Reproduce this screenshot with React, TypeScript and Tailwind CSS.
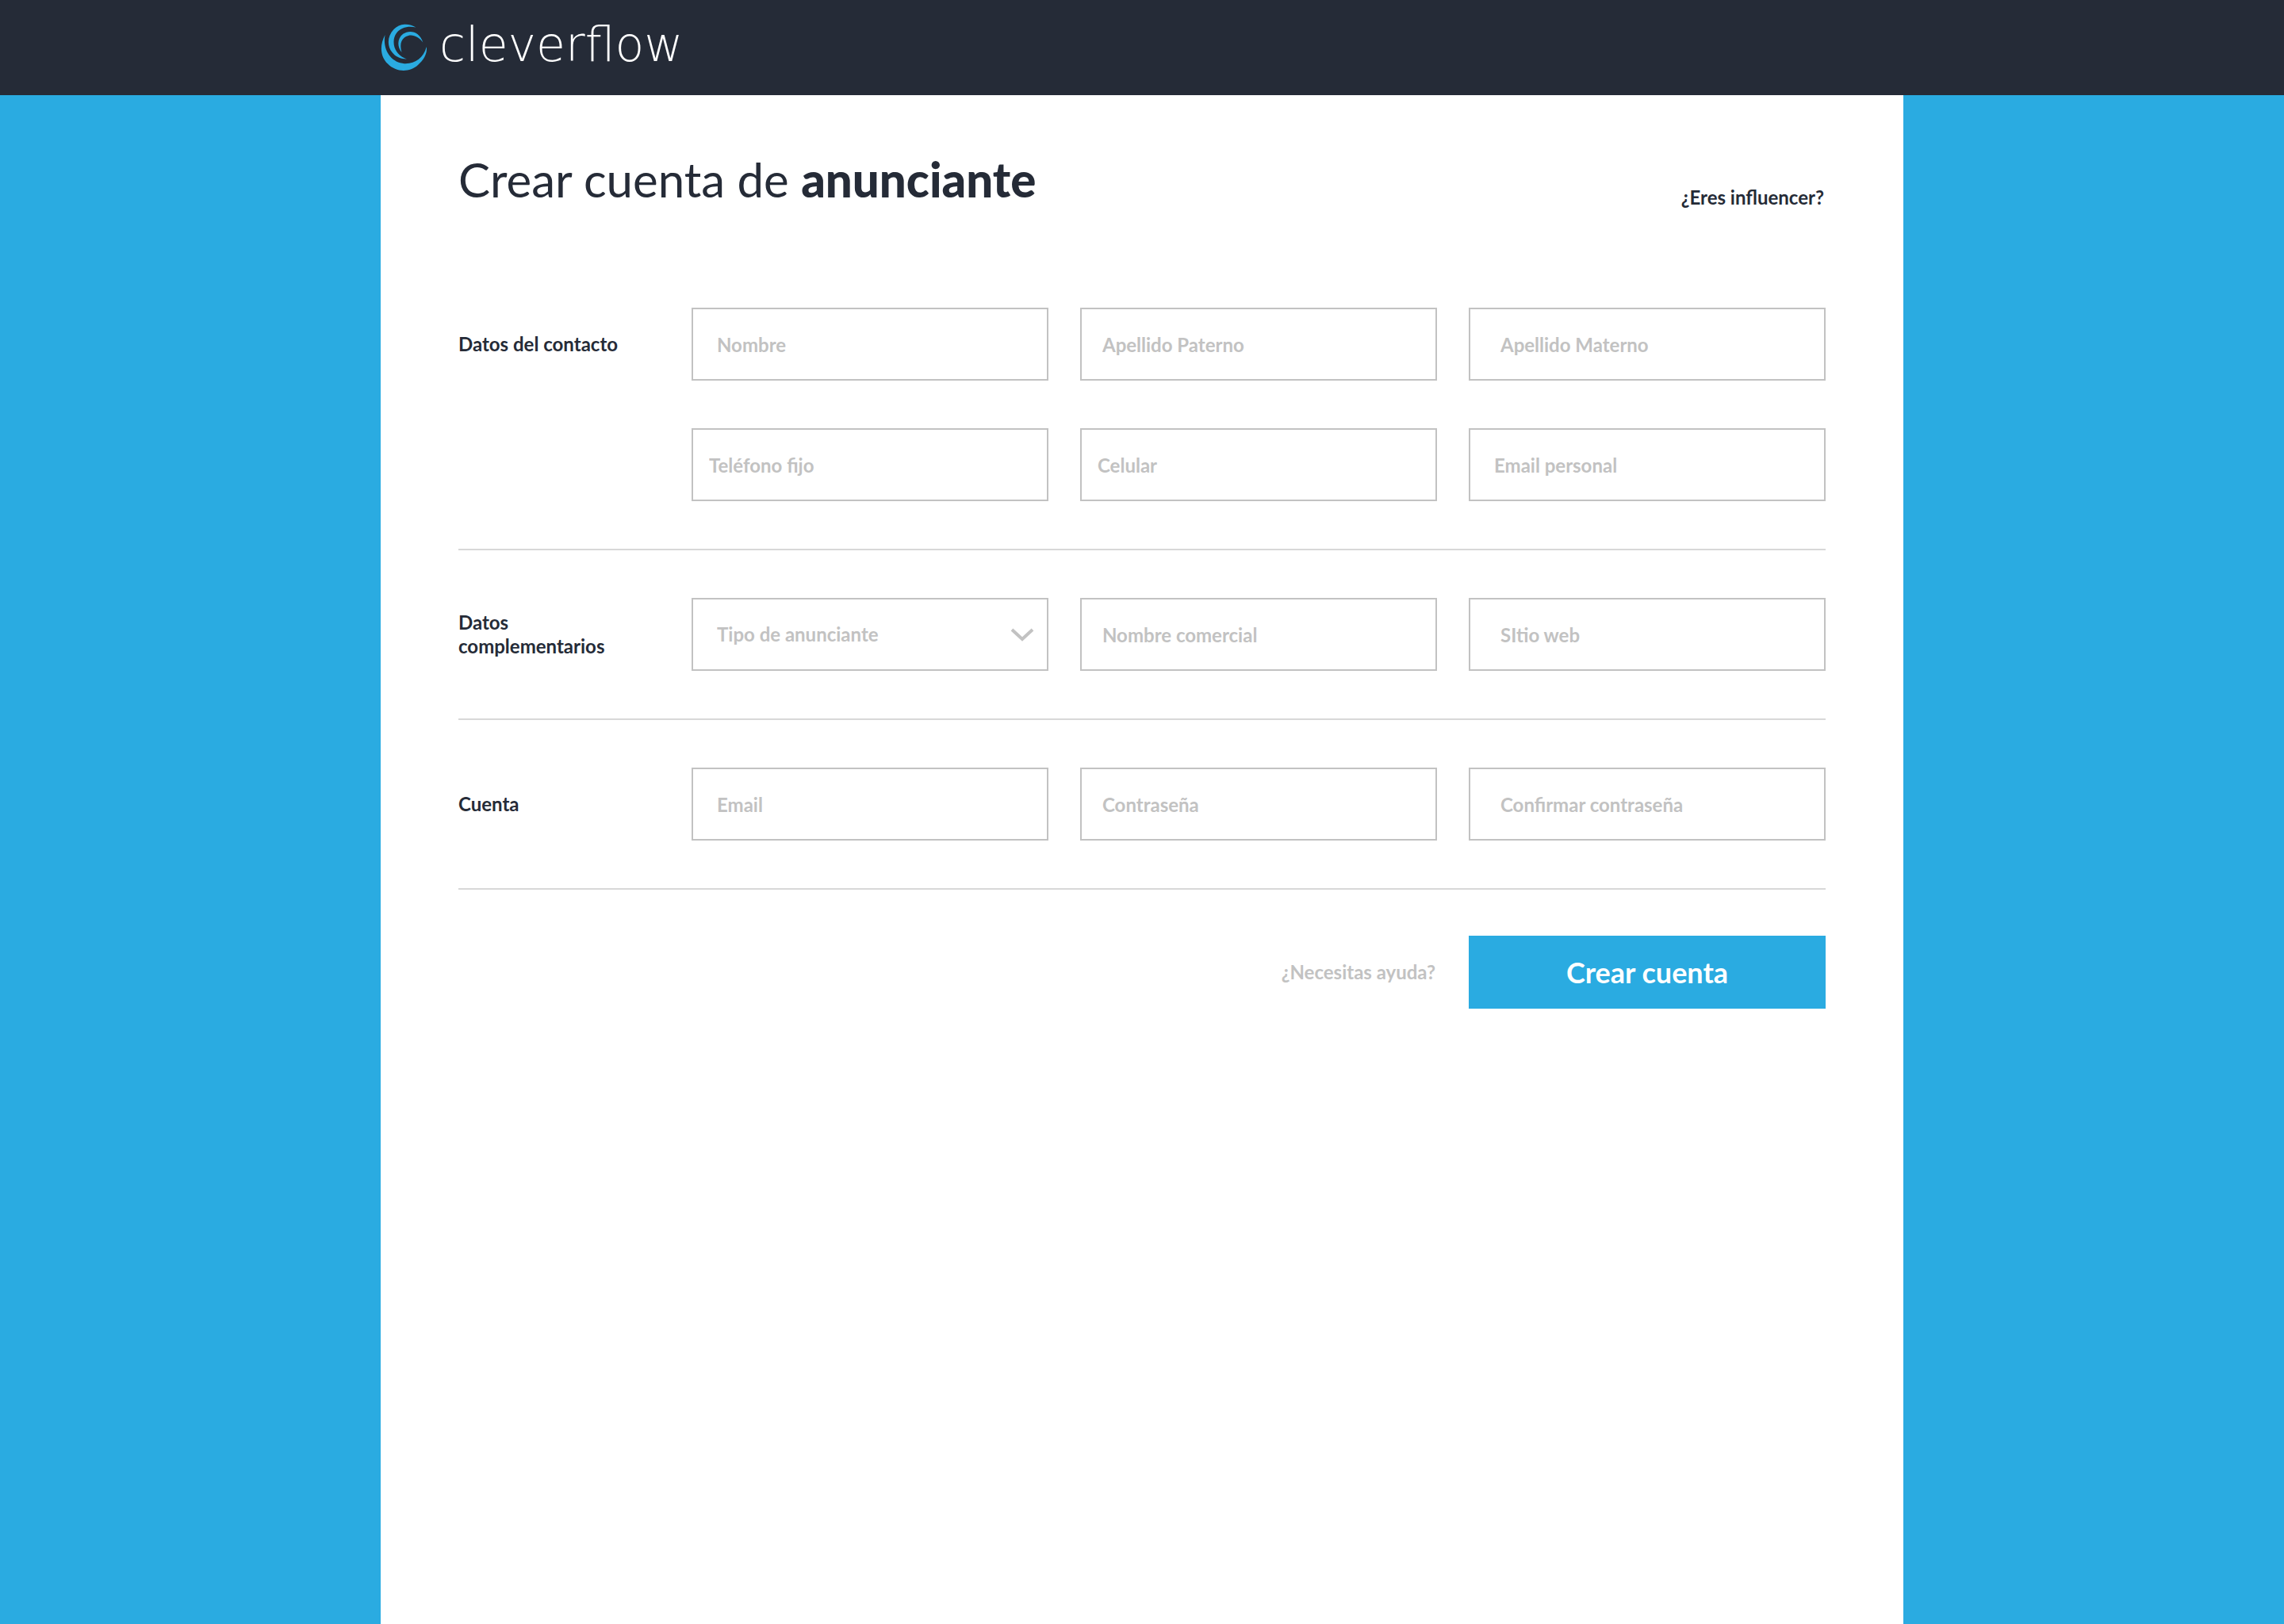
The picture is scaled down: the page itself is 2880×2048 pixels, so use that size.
import React from "react";

type Field = { label: string; type?: string; pad: string; options?: string[] };
type Section = { title: string; rows: Field[][] };

const sections: Section[] = [
  {
    title: "Datos del contacto",
    rows: [
      [
        { label: "Nombre", pad: "pl-[30px]" },
        { label: "Apellido Paterno", pad: "pl-[26px]" },
        { label: "Apellido Materno", pad: "pl-[38px]" },
      ],
      [
        { label: "Teléfono fijo", type: "tel", pad: "pl-5" },
        { label: "Celular", type: "tel", pad: "pl-5" },
        { label: "Email personal", type: "email", pad: "pl-[30px]" },
      ],
    ],
  },
  {
    title: "Datos complementarios",
    rows: [
      [
        { label: "Tipo de anunciante", pad: "pl-[30px]", options: ["Marca", "Agencia"] },
        { label: "Nombre comercial", pad: "pl-[26px]" },
        { label: "SItio web", type: "url", pad: "pl-[38px]" },
      ],
    ],
  },
  {
    title: "Cuenta",
    rows: [
      [
        { label: "Email", type: "email", pad: "pl-[30px]" },
        { label: "Contraseña", type: "password", pad: "pl-[26px]" },
        { label: "Confirmar contraseña", type: "password", pad: "pl-[38px]" },
      ],
    ],
  },
];

function LogoMark() {
  return (
    <svg viewBox="0 0 80 80" className="size-20 shrink-0" fill="#2aabe1" aria-hidden="true">
      <path d="M15.5 24 C8 38 10 52 19 60.500 C29 71 46 72 57 62 C65 55 69 47 67.800 39 C64 53 54 60 41.500 60.300 C24 60 12 44 15.500 24Z" />
      <path d="M54.500 14.500 C46 9 34 9 26.500 17 C18 26 18 38 24.500 46 C29 52 36 54.500 43 54.500 C33 51 26.500 43 26.500 33 C26.500 20 38 11 54.500 14.500Z" />
      <path d="M36.500 46 C30 38 31.500 28 38 23 C47 17 59 20 63.300 33.500 C58 26 49 22 42 26 C35 30 34 37 36.500 46Z" />
    </svg>
  );
}

function FormField({ field }: { field: Field }) {
  const box =
    "h-[92px] w-full rounded-none border-2 border-[#c2c2c2] bg-white pr-5 text-2xl font-bold " + field.pad;
  if (field.options) {
    return (
      <div className="relative">
        <select aria-label={field.label} defaultValue="" className={box + " appearance-none text-[#c2c2c2]"}>
          <option value="">{field.label}</option>
          {field.options.map((o) => (
            <option key={o}>{o}</option>
          ))}
        </select>
        <svg
          viewBox="0 0 30 18"
          className="pointer-events-none absolute top-[38px] right-[18px] h-[18px] w-[30px]"
          fill="none"
          stroke="#c2c2c2"
          strokeWidth="4"
          aria-hidden="true"
        >
          <path d="M2 2 L15 14 L28 2" />
        </svg>
      </div>
    );
  }
  return (
    <input
      type={field.type ?? "text"}
      aria-label={field.label}
      placeholder={field.label}
      className={box + " text-[#252b37] placeholder:text-[#c2c2c2] placeholder:opacity-100"}
    />
  );
}

export default function App() {
  return (
    <div className="flex min-h-screen flex-col bg-[#2aabe1] font-['Lato',sans-serif] text-[#252b37]">
      <header className="h-[120px] bg-[#252b37]">
        <div className="mx-auto flex h-full w-2/3 items-center">
          <a href="#" className="-ml-[10px] flex items-center gap-1 text-white" aria-label="cleverflow">
            <LogoMark />
            <span className="pb-2 font-['DejaVu_Sans',sans-serif] text-6xl font-extralight">cleverflow</span>
          </a>
        </div>
      </header>
      <main className="mx-auto w-2/3 grow bg-white px-[98px] pt-[70px]">
        <div className="flex items-start justify-between">
          <h1 className="text-[60px] leading-[72px]">
            Crear cuenta de <strong className="font-black">anunciante</strong>
          </h1>
          <a href="#" className="pt-11 pr-0.5 text-2xl leading-[30px] font-bold">
            ¿Eres influencer?
          </a>
        </div>
        <form className="pt-[124px]">
          {sections.map((s) => (
            <fieldset
              key={s.title}
              aria-label={s.title}
              className="mb-[60px] grid grid-cols-[254px_1fr] gap-x-10 border-b-2 border-[#d8d8d8] pb-[60px]"
            >
              <div className="flex h-[92px] items-center pr-10 text-2xl leading-[30px] font-bold">{s.title}</div>
              <div className="grid grid-cols-3 gap-x-10 gap-y-[60px]">
                {s.rows.flat().map((f) => (
                  <FormField key={f.label} field={f} />
                ))}
              </div>
            </fieldset>
          ))}
          <div className="-mt-0.5 flex items-center justify-end gap-[42px]">
            <a href="#" className="text-2xl font-bold text-[#c2c2c2]">
              ¿Necesitas ayuda?
            </a>
            <button type="submit" className="h-[92px] w-[450px] bg-[#2aabe1] text-4xl font-bold text-white">
              Crear cuenta
            </button>
          </div>
        </form>
      </main>
    </div>
  );
}
